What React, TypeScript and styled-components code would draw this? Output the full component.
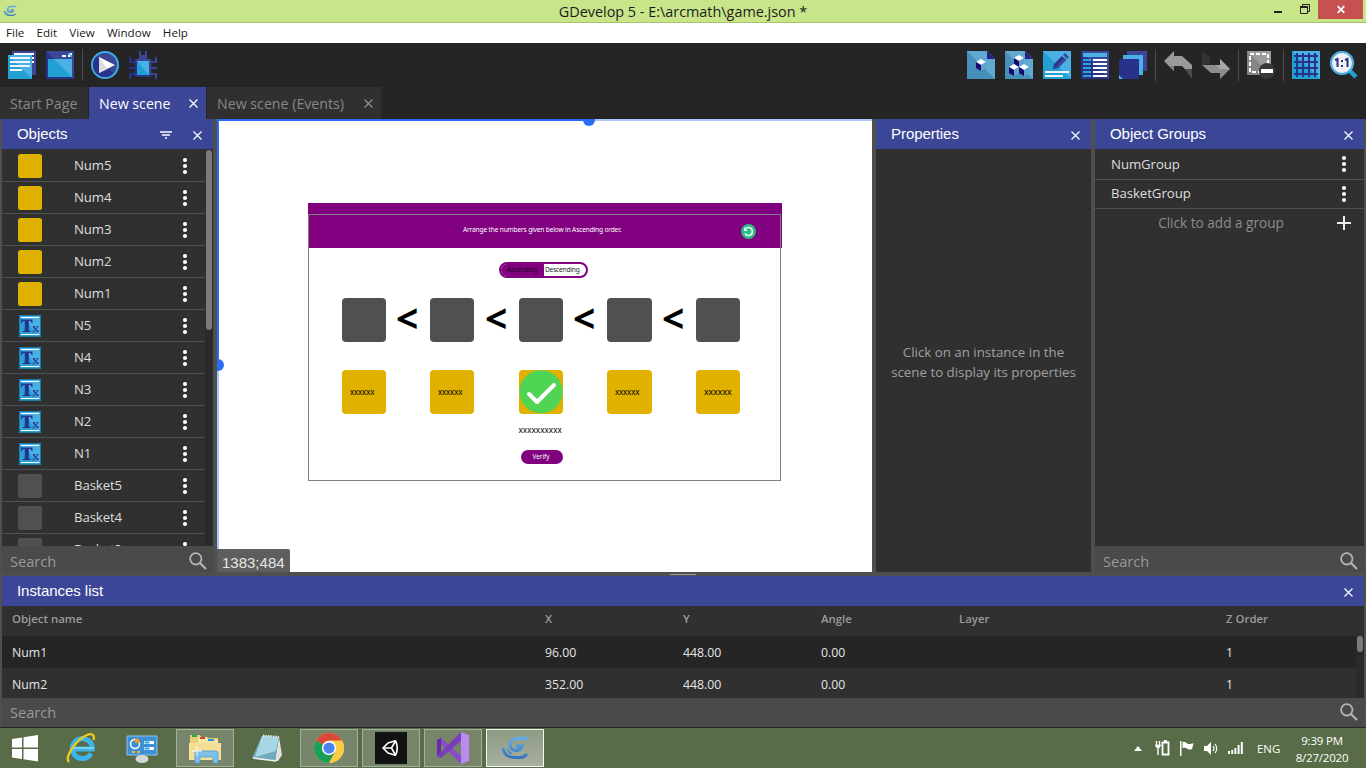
import React from 'react';
import styled, { createGlobalStyle } from 'styled-components';

const ui = '"Open Sans", "Noto Sans", sans-serif';
const head = '"Liberation Sans", Arial, sans-serif';

const Global = createGlobalStyle`
  * { box-sizing: border-box; }
  html, body { margin: 0; padding: 0; background: #4f4f4f; overflow: hidden; }
  body { font-family: ${ui}; }
  svg { display: block; flex: none; }
`;

const Window = styled.div`
  width: 1366px; height: 768px; display: flex; flex-direction: column;
  overflow: hidden; background: #4f4f4f; white-space: nowrap;
`;

/* ---------- title bar and menu ---------- */
const TitleBar = styled.header`
  height: 23px; flex: none; display: grid; grid-template-columns: 140px 1fr 140px;
  background: #c9e58a; border-bottom: 1px solid #a9c26d;
`;
const TitleIcon = styled.div` padding: 4px 0 0 3px; `;
const Title = styled.h1`
  margin: 0; text-align: center; font: 400 14.4px/22px ${ui}; color: #1c1c1c;
  padding-top: 1px;
`;
const WinButtons = styled.div` display: flex; justify-content: flex-end; padding-right: 3px; `;
const WinButton = styled.div<{ $w: number; $red?: boolean }>`
  width: ${p => p.$w}px; height: 19px; display: flex; justify-content: center;
  background: ${p => (p.$red ? '#c75050' : 'transparent')};
`;
const MenuBar = styled.nav`
  height: 20px; flex: none; background: #fff; display: flex; padding-left: 6px; gap: 12.2px;
  font: 400 11.6px/19px ${ui}; color: #1a1a1a;
`;

/* ---------- toolbar ---------- */
const Toolbar = styled.div`
  height: 44px; flex: none; background: #252525; display: flex;
  justify-content: space-between; padding: 6px 8px 0;
`;
const ToolGroup = styled.div`
  display: flex; height: 32px; align-items: center;
  & > svg + svg { margin-left: 10px; }
`;
const Sep = styled.div` width: 1px; height: 32px; margin: 0 8px; background: #4c4c4c; `;

/* ---------- tabs ---------- */
const Tabs = styled.div` height: 32px; flex: none; background: #252525; display: flex; gap: 1px; `;
const Tab = styled.div<{ $w: number; $active?: boolean }>`
  width: ${p => p.$w}px; padding: 0 8px 0 10px; display: flex; justify-content: space-between;
  background: ${p => (p.$active ? '#3b4697' : '#303030')};
  color: ${p => (p.$active ? '#fff' : '#888')};
  font: 400 14.2px/33px ${ui};
  & > svg { margin-top: 11px; }
`;

/* ---------- panels ---------- */
const Workspace = styled.main`
  height: 453px; flex: none; display: grid; padding: 0 2px; gap: 4px;
  grid-template-columns: 211px 655px 215px 269px; background: #4f4f4f;
`;
const Panel = styled.section`
  background: #303030; display: flex; flex-direction: column; min-height: 0; overflow: hidden;
`;
const PanelHead = styled.div`
  height: 30px; flex: none; background: #3b4697; color: #fff; padding: 0 11.5px 0 15px;
  display: flex; align-items: flex-start; font: 400 15px/30px ${head};
  & > span { flex: 1; letter-spacing: -0.05px; }
  & > svg { margin-top: 10.5px; }
`;
const ScrollArea = styled.div` flex: 1; min-height: 0; display: flex; overflow: hidden; padding-top: 1px; `;
const ObjectList = styled.div` width: 203px; `;
const ObjectRow = styled.div`
  height: 32px; display: flex; border-bottom: 1px solid #505050; padding: 4px 14px 0 16px;
  color: #dedede; font: 400 13.2px/23px ${ui};
  & > span { flex: 1; padding-left: 32px; letter-spacing: -0.1px; }
`;
const Track = styled.div` width: 8px; padding-left: 1px; background: #2a2a2a; `;
const Thumb = styled.div<{ $h: number }>`
  width: 6px; height: ${p => p.$h}px; background: #7b7b7b; border-radius: 3px;
`;
const Swatch = styled.i<{ $c: string }>`
  width: 24px; height: 24px; border-radius: 2.5px; background: ${p => p.$c}; flex: none;
`;
const SearchBar = styled.div<{ $h: number; $lh?: number }>`
  height: ${p => p.$h}px; flex: none; background: #4a4a4a; color: #999; display: flex;
  justify-content: space-between; padding: 0 6px 0 8px;
  font: 400 14.6px/${p => p.$lh ?? 30}px ${ui};
  & > svg { margin-top: ${p => (p.$lh ? 5 : 6)}px; }
`;
const GroupRow = styled.div<{ $h: number; $lh: number }>`
  height: ${p => p.$h}px; border-bottom: 1px solid #505050; display: flex;
  justify-content: space-between; padding: 0 14px 0 16px; color: #dedede;
  font: 400 13.2px/${p => p.$lh}px ${ui}; letter-spacing: -0.05px;
  & > svg { margin-top: ${p => Math.floor((p.$h - 24) / 2)}px; }
`;
const AddRow = styled.div`
  height: 29px; display: flex; padding-right: 13px; color: #8c8c8c;
  font: 400 13.6px/28px ${ui};
  & > span { flex: 1; text-align: center; padding-left: 10px; }
  & > svg { margin-top: 7px; }
`;
const Grow = styled.div` flex: 1; `;
const Hint = styled.p`
  margin: auto 0; text-align: center; color: #a0a0a0; font: 400 13.3px/20px ${ui};
  padding-top: 2px;
`;

/* ---------- scene canvas ---------- */
const Canvas = styled.section` position: relative; background: #fff; overflow: hidden; `;
const Item = styled.div<{ $x: number; $y: number; $w?: number; $h?: number; $bg?: string; $r?: number }>`
  position: absolute; left: ${p => p.$x - 217}px; top: ${p => p.$y - 119}px;
  width: ${p => (p.$w ? p.$w + 'px' : 'auto')}; height: ${p => (p.$h ? p.$h + 'px' : 'auto')};
  background: ${p => p.$bg ?? 'transparent'}; border-radius: ${p => p.$r ?? 0}px;
`;
const SceneFrame = styled(Item)` border: 1px solid #808080; `;
const SceneText = styled(Item)<{ $size: number; $c?: string; $ls?: number; $b?: number }>`
  font: ${p => p.$b ?? 400} ${p => p.$size}px/1 "Noto Sans", sans-serif; color: ${p => p.$c ?? '#000'};
  letter-spacing: ${p => p.$ls ?? 0}px;
`;
const Toggle = styled(Item)` border: 2px solid #800080; background: #fff; overflow: hidden; `;
const ToggleOn = styled.div` width: 43px; height: 100%; background: #800080; `;
const Coords = styled(Item)`
  background: rgba(76, 76, 76, 0.9); color: #e6e6e6; padding-left: 5px;
  border-top-right-radius: 2px; font: 400 15px/27px ${head};
`;
const Knob = styled(Item)` background: #2b6cf6; `;

/* ---------- instances list ---------- */
const Splitter = styled.div`
  height: 4px; flex: none; display: flex; justify-content: center; align-items: center;
  &::before { content: ''; width: 26px; height: 1px; background: #9a9a9a; }
`;
const Instances = styled.section`
  height: 151px; flex: none; margin: 0 2px; display: flex; flex-direction: column; background: #303030;
`;
const TableRow = styled.div<{ $h: number; $bg?: string; $head?: boolean }>`
  height: ${p => p.$h}px; background: ${p => p.$bg ?? 'transparent'};
  display: grid; grid-template-columns: 533px 138px 138px 138px 267px 1fr; padding-left: 10px;
  color: ${p => (p.$head ? '#9b9b9b' : '#e4e4e4')};
  font: ${p => (p.$head ? `600 11.4px/26px` : `400 12.3px/33px`)} ${ui};
`;
const TableBody = styled.div` height: 62px; flex: none; display: flex; `;
const Rows = styled.div` width: 1354px; overflow: hidden; `;

/* ---------- taskbar ---------- */
const Taskbar = styled.footer`
  height: 41px; flex: none; background: #586c48; border-top: 1px solid #272727;
  display: flex; justify-content: space-between; color: #fff;
`;
const Apps = styled.div` display: flex; gap: 4px; `;
const TaskButton = styled.div<{ $w?: number; $state?: 'open' | 'active' }>`
  width: ${p => p.$w ?? 58}px; height: 38px; margin-top: 1px; display: flex; align-items: center; justify-content: center;
  background: ${p => (p.$state === 'active' ? 'linear-gradient(#8f9a84,#a7b09f)' : p.$state ? '#77866a' : 'transparent')};
  border: ${p => (p.$state ? `1px solid ${p.$state === 'active' ? '#f4f6f2' : '#a4ae9b'}` : '0')};
`;
const Tray = styled.div` display: flex; align-items: flex-start; font: 400 11.4px/39px ${ui}; padding-right: 12px; `;
const TraySlot = styled.div<{ $w: number }>` width: ${p => p.$w}px; height: 40px; display: flex; align-items: center; `;
const Clock = styled.div`
  width: 62px; font: 400 11.5px/17px ${ui}; text-align: center; padding-top: 4px; margin-right: 1px;
  display: flex; flex-direction: column; align-items: center; letter-spacing: -0.2px;
`;

/* ---------- icons ---------- */
const Cross = ({ s = 9, c = '#fff', w = 1.2 }: { s?: number; c?: string; w?: number }) => (
  <svg width={s} height={s + 2} viewBox={`0 -1 ${s} ${s + 2}`}><path d={`M.5 .5L${s - 0.5} ${s - 0.5}M${s - 0.5} .5L.5 ${s - 0.5}`} stroke={c} strokeWidth={w} /></svg>
);
const FilterIcon = styled.svg` margin-right: 20.5px; `;
const Filter = () => (
  <FilterIcon width="12" height="11" viewBox="0 -1 12 11"><path d="M0 1h12M2 4h8M5 7h2" stroke="#fff" strokeWidth="1.400" /></FilterIcon>
);
const Dots = () => (
  <svg width="12" height="24" viewBox="0 0 12 24" fill="#fff"><circle cx="6" cy="6" r="2.1" /><circle cx="6" cy="12" r="2.1" /><circle cx="6" cy="18" r="2.1" /></svg>
);
const Lens = () => (
  <svg width="18" height="18" viewBox="0 0 18 18" fill="none" stroke="#b4b4b4"><circle cx="6.8" cy="6.8" r="5.7" strokeWidth="1.8" /><path d="M11 11l6 6" strokeWidth="2.2" /></svg>
);
const TextIcon = () => (
  <svg width="24" height="24" viewBox="0 0 24 24">
    <path d="M1 1h22v22H1z" fill="#1b7ea6" /><path d="M2 2h20v20H2z" fill="#29a0d6" /><path d="M2 2h20v20z" fill="#48b0e4" />
    <path d="M3 3.500h18M3 20.500h18" stroke="#fff" strokeWidth="1.200" />
    <path d="M3 5.500h11.500v3.500h-1l-.7-2h-2v9.500l1.800.5v1H5v-1l1.800-.5V7H4.700l-.7 2H3z" fill="#27348b" />
    <path d="M15.500 12.800l4.400 4.900" stroke="#34449a" strokeWidth="1.800" /><path d="M20 12.800l-4.600 4.900M14.800 12.500h2.400M18.500 12.500h2M14.600 17.700h2M18.400 17.700h2.500" stroke="#34449a" strokeWidth="1" />
  </svg>
);
const GLogo = ({ s = 16 }: { s?: number }) => (
  <svg width={s} height={s} viewBox="0 0 28 28" fill="none">
    <defs><linearGradient id={`g${s}`} gradientUnits="userSpaceOnUse" x1="0" y1="3" x2="0" y2="25"><stop offset="0" stopColor="#66b3e8" /><stop offset="1" stopColor="#2f6fc0" /></linearGradient></defs>
    <g stroke={`url(#g${s})`}>
      <path d="M26.500 5H17c-5 0-7.500 2.800-7.500 6s2.200 5.200 5.500 5.200 5-1.700 5.500-4.200H15" strokeWidth="2.900" />
      <path d="M3 13.500c.3 6.500 4.500 9.300 11.500 9.300h4.500c2.500 0 4.500-1 6-3.300" strokeWidth="2.700" />
      <path d="M6.800 15c.8 2.300 2.200 3.700 4.200 4.500" strokeWidth="1.400" />
    </g>
  </svg>
);
const T = ({ children }: { children: React.ReactNode }) => (
  <svg width="28" height="28" viewBox="0 0 28 28">{children}</svg>
);
const IconProject = () => (
  <T><path d="M4 0h24v24H4z" fill="#3b4697" /><path d="M6 3h20M24 7h2M24 11h2" stroke="#fff" strokeWidth="2" />
    <path d="M0 4h24v24H0z" fill="#229fd3" /><path d="M0 4h24v24z" fill="#4bb0e4" />
    <path d="M2 7h20M2 11h20M2 15h20M2 19h12" stroke="#eef4f8" strokeWidth="2" /></T>
);
const IconScene = () => (
  <T><path d="M0 0h28v28H0z" fill="#27328a" /><path d="M0 0h28v28z" fill="#3b4697" />
    <path d="M2 8h24v18H2z" fill="#229fd3" /><path d="M8 8h18v18z" fill="#4bb0e4" />
    <path d="M16 4h4v2h-4zM22 4h2v2h-2zM24 2h2v2h-2z" fill="#fff" /><path d="M22 2h2v2h-2zM24 4h2v2h-2z" fill="#4bb0e4" /></T>
);
const IconPlay = () => (
  <T><circle cx="14" cy="14" r="13" fill="#3b4697" stroke="#3cacdf" strokeWidth="2" />
    <path d="M5.500 5.500a12 12 0 0 0 17 17z" fill="#27328a" /><path d="M8 6l16 8-16 8z" fill="#fff" /><path d="M8 6v16l8-4z" fill="#dcdcdc" /></T>
);
const IconDebug = () => (
  <T><g fill="none" strokeWidth="2"><path d="M1 6v5h7M0 17h8M1 28v-5h7" stroke="#27328a" /><path d="M27 6v5h-7M28 17h-8M27 28v-5h-7" stroke="#3b4697" /></g>
    <path d="M10 0h2v4h4V0h2v9h-8z" fill="#3b4697" /><path d="M6 8h16v18H6z" fill="#3b4697" /><path d="M6 8v18h16z" fill="#27328a" />
    <path d="M8 10h12v14H8z" fill="#229fd3" /><path d="M8 10h12v14z" fill="#4bb0e4" /></T>
);
const Cube = ({ x, y }: { x: number; y: number }) => (
  <g transform={`translate(${x} ${y})`}><path d="M0 3l5-3 5 3-5 3z" fill="#fff" /><path d="M0 3l5 3v6l-5-3z" fill="#170a70" /><path d="M5 6l5-3v6l-5 3z" fill="#5ba3cb" /></g>
);
const IconObj = ({ many }: { many?: boolean }) => (
  <T><path d="M0 0h28v28H0z" fill="#468fb9" /><path d="M0 0h20l8 8v20z" fill="#60aad2" /><path d="M20 0l8 8h-8z" fill="#2b1f8f" /><path d="M20 0h8v8z" fill="#252525" />
    {many ? <><Cube x={9} y={4} /><Cube x={4} y={13} /><Cube x={14} y={13} /></> : <Cube x={9} y={8} />}</T>
);
const IconProps = () => (
  <T><path d="M0 0h28v28H0z" fill="#229fd3" /><path d="M0 0h28v28z" fill="#4bb0e4" />
    <path d="M10 18l1-5 8-8 4 4-8 8z" fill="#27328a" /><path d="M13 15l8-8 2 2-8 8-5 1z" fill="#3b4697" /><path d="M20 4l2-2 4 4-2 2z" fill="#3b4697" />
    <path d="M2 21h24M2 25h18" stroke="#eef4f8" strokeWidth="2" /></T>
);
const IconList = () => (
  <T><path d="M0 0h28v28H0z" fill="#27328a" /><path d="M0 0h28v28z" fill="#3b4697" /><path d="M2 2h24v4H2z" fill="#4bb0e4" />
    <path d="M2 9h8M2 13h8M2 17h8M2 21h8M2 25h8" stroke="#2ea5da" strokeWidth="2" /><path d="M12 9h14M12 13h14M12 17h14M12 21h14M12 25h14" stroke="#fff" strokeWidth="2" /></T>
);
const IconLayers = () => (
  <T><path d="M8 0h20v20H8z" fill="#3b4697" /><path d="M4 4h20v20H4z" fill="#4bb0e4" /><path d="M0 8h20v20H4l-4-4z" fill="#27328a" /><path d="M0 24l4 4H0z" fill="#4bb0e4" /></T>
);
const IconUndo = () => (
  <T><path d="M20 17h8v11z" fill="#4a4a4a" /><path d="M0 10L10 0v5h8l10 9v4h-7l-3-3h-8v5z" fill="#9a9a9a" /><path d="M0 10L10 20v-5H5z" fill="#7f7f7f" /></T>
);
const IconRedo = () => (
  <T><path d="M0 0l8 6v6l-8 3z" fill="#343434" /><path d="M0 14h18V8l10 10-10 10v-6H9z" fill="#8d8d8d" /><path d="M18 8l10 10H18l-4-4h4z" fill="#a6a6a6" /></T>
);
const IconMask = () => (
  <T><path d="M0 0h24v24H0z" fill="#858585" /><path d="M0 0h24v24z" fill="#9c9c9c" /><path d="M3 3h18v18H3z" fill="none" stroke="#fff" strokeWidth="2" strokeDasharray="4 2" />
    <circle cx="20" cy="20" r="8" fill="#383838" /><path d="M14 18h12v4H14z" fill="#fff" /></T>
);
const IconGrid = () => (
  <T><path d="M0 0h28v28H0z" fill="#229fd3" /><path d="M0 0h28v28z" fill="#4bb0e4" /><path d="M5 2v24M11 2v24M17 2v24M23 2v24M2 5h24M2 11h24M2 17h24M2 23h24" stroke="#27328a" strokeWidth="2" /></T>
);
const IconZoom = () => (
  <T><path d="M19 19l7 7" stroke="#229fd3" strokeWidth="4.500" /><circle cx="12" cy="12" r="11" fill="#f2f2f2" stroke="#4bb0e4" strokeWidth="2.200" />
    <path d="M5 9l2.500-1v8M15 9l2.500-1v8" fill="none" stroke="#27328a" strokeWidth="2" /><path d="M11 9h2v2h-2zM11 14h2v2h-2z" fill="#27328a" /></T>
);

/* ---------- data ---------- */
const objects: [string, 'num' | 'text' | 'basket'][] = [
  ['Num5', 'num'], ['Num4', 'num'], ['Num3', 'num'], ['Num2', 'num'], ['Num1', 'num'],
  ['N5', 'text'], ['N4', 'text'], ['N3', 'text'], ['N2', 'text'], ['N1', 'text'],
  ['Basket5', 'basket'], ['Basket4', 'basket'], ['Basket3', 'basket'],
];
const columns = [342, 430, 519, 607, 696];
const widths = [44, 44, 44, 45, 44];

export default function App() {
  return (
    <Window>
      <Global />
      <TitleBar>
        <TitleIcon><GLogo s={14} /></TitleIcon>
        <Title>GDevelop 5 - E:\arcmath\game.json *</Title>
        <WinButtons>
          <WinButton $w={28}><svg width="8" height="19"><path d="M0 11h8v2H0z" fill="#222" /></svg></WinButton>
          <WinButton $w={26}><svg width="12" height="19" fill="none" stroke="#222"><path d="M3.500 6V4.500h7v7H9" /><path d="M1.500 7h7v6.500h-7z" /><path d="M1 7h8" strokeWidth="2" /></svg></WinButton>
          <WinButton $w={45} $red><svg width="8" height="19" viewBox="0 -5.500 8 19"><path d="M.7 .7l6.600 6.600M7.300 .7L.7 7.300" stroke="#fff" strokeWidth="1.800" /></svg></WinButton>
        </WinButtons>
      </TitleBar>
      <MenuBar><span>File</span><span>Edit</span><span>View</span><span>Window</span><span>Help</span></MenuBar>

      <Toolbar>
        <ToolGroup><IconProject /><IconScene /><Sep /><IconPlay /><IconDebug /></ToolGroup>
        <ToolGroup>
          <IconObj /><IconObj many /><IconProps /><IconList /><IconLayers /><Sep />
          <IconUndo /><IconRedo /><Sep /><IconMask /><Sep /><IconGrid /><IconZoom />
        </ToolGroup>
      </Toolbar>

      <Tabs>
        <Tab $w={88}>Start Page</Tab>
        <Tab $w={117} $active>New scene<Cross /></Tab>
        <Tab $w={174}>New scene (Events)<Cross c="#8f8f8f" /></Tab>
      </Tabs>

      <Workspace>
        <Panel>
          <PanelHead><span>Objects</span><Filter /><Cross /></PanelHead>
          <ScrollArea>
            <ObjectList>
              {objects.map(([name, kind]) => (
                <ObjectRow key={name}>
                  {kind === 'text' ? <TextIcon /> : <Swatch $c={kind === 'num' ? '#e1b100' : '#505050'} />}
                  <span>{name}</span><Dots />
                </ObjectRow>
              ))}
            </ObjectList>
            <Track><Thumb $h={180} /></Track>
          </ScrollArea>
          <SearchBar $h={26}>Search<Lens /></SearchBar>
        </Panel>

        <Canvas>
          <Item $x={308} $y={203} $w={474} $h={45} $bg="#800080" />
          <SceneFrame $x={308} $y={214} $w={473} $h={267} />
          <SceneText $x={463} $y={226.5} $size={6.6} $ls={-0.16} $c="#fff">Arrange the numbers given below in Ascending order.</SceneText>
          <Item $x={741} $y={223.5}>
            <svg width="15" height="15" viewBox="0 0 15 15"><circle cx="7.500" cy="7.500" r="7.400" fill="#2bbf85" /><path d="M4 5.500A4 4 0 1 1 4 9.500" fill="none" stroke="#e8fff6" strokeWidth="1.600" /><path d="M3 3v4h3.500z" fill="#e8fff6" /></svg>
          </Item>
          <Toggle $x={499} $y={262} $w={89} $h={16} $r={8}><ToggleOn /></Toggle>
          <SceneText $x={507} $y={266.5} $size={6.6} $ls={-0.2} $c="#250025">Ascending</SceneText>
          <SceneText $x={545} $y={266.5} $size={6.6} $ls={-0.2} $c="#222">Descending</SceneText>
          {columns.map((x, i) => <Item key={x} $x={x} $y={298} $w={widths[i]} $h={44} $bg="#505050" $r={4} />)}
          {[396, 485, 573, 662].map(x => <SceneText key={x} $x={x} $y={298} $size={39} $b={700}>&lt;</SceneText>)}
          {columns.map((x, i) => <Item key={x} $x={x} $y={370} $w={widths[i]} $h={44} $bg="#e1b100" $r={4} />)}
          {[350, 438, 615].map(x => <SceneText key={x} $x={x} $y={388} $size={8} $ls={-0.2}>xxxxxx</SceneText>)}
          <SceneText $x={704} $y={388} $size={8.8} $ls={-0.05}>xxxxxx</SceneText>
          <Item $x={519} $y={370}>
            <svg width="44" height="44"><circle cx="22" cy="21.700" r="21.500" fill="#4fd553" /><path d="M10 24l8 8 17-17" fill="none" stroke="#fff" strokeWidth="4" strokeLinecap="round" strokeLinejoin="round" /></svg>
          </Item>
          <SceneText $x={518.5} $y={426} $size={8.2}>xxxxxxxxxx</SceneText>
          <Item $x={521} $y={450} $w={42} $h={14} $bg="#800080" $r={7} />
          <SceneText $x={532.5} $y={453.5} $size={6.4} $c="#fff">Verify</SceneText>
          <Item $x={217} $y={119} $w={655} $h={2} $bg="linear-gradient(90deg,#2b6cf6 57%,#aac6fb 57%)" />
          <Item $x={217} $y={119} $w={2} $h={453} $bg="linear-gradient(#2b6cf6 54%,#aac6fb 54%)" />
          <Knob $x={583} $y={114} $w={12} $h={12} $r={6} />
          <Knob $x={212} $y={359} $w={12} $h={12} $r={6} />
          <Coords $x={217} $y={549} $w={73} $h={23}>1383;484</Coords>
        </Canvas>

        <Panel>
          <PanelHead><span>Properties</span><Cross /></PanelHead>
          <Hint>Click on an instance in the<br />scene to display its properties</Hint>
        </Panel>

        <Panel>
          <PanelHead><span>Object Groups</span><Cross /></PanelHead>
          <GroupRow $h={31} $lh={30}>NumGroup<Dots /></GroupRow>
          <GroupRow $h={29} $lh={26}>BasketGroup<Dots /></GroupRow>
          <AddRow><span>Click to add a group</span><svg width="14" height="14"><path d="M7 0v14M0 7h14" stroke="#eee" strokeWidth="2" /></svg></AddRow>
          <Grow />
          <SearchBar $h={26}>Search<Lens /></SearchBar>
        </Panel>
      </Workspace>

      <Splitter />
      <Instances>
        <PanelHead><span>Instances list</span><Cross /></PanelHead>
        <TableRow $h={30} $head><span>Object name</span><span>X</span><span>Y</span><span>Angle</span><span>Layer</span><span>Z Order</span></TableRow>
        <TableBody>
          <Rows>
            <TableRow $h={32} $bg="#252525"><span>Num1</span><span>96.00</span><span>448.00</span><span>0.00</span><span /><span>1</span></TableRow>
            <TableRow $h={32}><span>Num2</span><span>352.00</span><span>448.00</span><span>0.00</span><span /><span>1</span></TableRow>
          </Rows>
          <Track><Thumb $h={16} /></Track>
        </TableBody>
        <SearchBar $h={29} $lh={28}>Search<Lens /></SearchBar>
      </Instances>

      <Taskbar>
        <Apps>
          <TaskButton $w={50}><svg width="28" height="28" viewBox="0 0 28 28" fill="#fff"><path d="M1 5l10-1.500v10H1zM12.500 3.300L27 1v12.500H12.500zM1 15h10v10L1 23.500zM12.500 15H27v12.500l-14.500-2.300z" /></svg></TaskButton>
          <TaskButton $w={54}>
            <svg width="32" height="32" viewBox="0 0 32 32" fill="none"><path d="M26 21.500a10 10 0 1 1 1.300-4.500H9" stroke="#3bb6ea" strokeWidth="5" /><path d="M8 16h21" stroke="#8adcf8" strokeWidth="1.500" /><path d="M4 30C-1 25 12 7 22 3c5-2 8-.5 6.500 5" stroke="#f2c81e" strokeWidth="2.400" /></svg>
          </TaskButton>
          <TaskButton $w={60}>
            <svg width="32" height="32" viewBox="0 0 32 32"><path d="M1 4h30v19H1z" fill="#3d8fd6" stroke="#8fc4ee" /><circle cx="9" cy="12" r="4.500" fill="none" stroke="#fff" strokeWidth="1.500" /><path d="M9 6a5 5 0 0 1 5 5H9z" fill="#f59a22" /><path d="M18 9h10v3H18zM18 15h10v3H18z" fill="#fff" /><path d="M18.500 9.500h5v2h-5zM18.500 15.500h5v2h-5z" fill="#24a4d8" /><path d="M6 19h3v2H6zM11 19h3v2h-3z" fill="#f5b342" /><ellipse cx="16" cy="27" rx="6.500" ry="4" fill="#d6d6d6" /></svg>
          </TaskButton>
          <TaskButton $state="open">
            <svg width="34" height="34" viewBox="0 0 34 34"><path d="M2 4h10l2 3h16v22H2z" fill="#e8cf7c" /><path d="M10 6h9l2 3h9v6H10z" fill="#f6e7a8" /><path d="M4 4h5v2H4z" fill="#28a745" /><path d="M12 6h5v2h-5z" fill="#d8432c" /><path d="M20 8h6v2h-6z" fill="#2f8fdc" /><path d="M1 12h32v17H1z" fill="#f3df97" /><path d="M7 32V22q0-2 2-2h19q2 0 2 2v10h-5v-6H12v6z" fill="#7cc0e8" stroke="#4f9dd0" strokeWidth=".8" /><path d="M9 15v10M4 20h10" stroke="#fff" strokeWidth="1" /></svg>
          </TaskButton>
          <TaskButton>
            <svg width="32" height="32" viewBox="0 0 32 32"><path d="M28 5l3 18-4 6-3 0z" fill="#e3e3dc" /><path d="M11 4l17 1-4 24-23-3z" fill="#6fa9bd" /><path d="M11 4l17 1-3 14L4 25z" fill="#a5d6e2" /><path d="M2 26l23 3" stroke="#eee" strokeWidth="1.500" /><path d="M12 3.500l16 1.500" stroke="#e8e8e8" strokeWidth="2" strokeDasharray="1.500 1" /></svg>
          </TaskButton>
          <TaskButton $state="open">
            <svg width="30" height="30" viewBox="0 0 48 48"><circle cx="24" cy="24" r="24" fill="#fbcb43" /><path d="M24 24L3.200 12A24 24 0 0 1 44.800 12z" fill="#d9483b" /><path d="M3.200 12A24 24 0 0 0 24 48l10.500-18.500L24 24z" fill="#1b9e57" /><path d="M24 12h20.800A24 24 0 0 1 24 48l10-18z" fill="#fbcb43" /><circle cx="24" cy="24" r="11.500" fill="#fff" /><circle cx="24" cy="24" r="9" fill="#4a85ee" /></svg>
          </TaskButton>
          <TaskButton $state="open">
            <svg width="32" height="32" viewBox="0 0 32 32" fill="none"><path d="M0 0h32v32H0z" fill="#111" />
              <path d="M8 16l5-5 7.500-2.200c2.200 4.500 2.200 10 0 14.400L13 21z" stroke="#fff" strokeWidth="1.700" strokeLinejoin="round" /><path d="M8 16h8.500l4-7M16.500 16l4 7" stroke="#fff" strokeWidth="1.600" /></svg>
          </TaskButton>
          <TaskButton $state="open">
            <svg width="32" height="32" viewBox="0 0 32 32"><path d="M0 8l4-2 20 18v8z" fill="#8a49c8" /><path d="M0 8v16l4 2V6z" fill="#6a2ba6" /><path d="M0 24l24-24v9L4 26z" fill="#7a3cba" /><path d="M24 0l8 3v26l-8 3z" fill="#b98af0" /></svg>
          </TaskButton>
          <TaskButton $state="active"><GLogo s={30} /></TaskButton>
        </Apps>
        <Tray>
          <TraySlot $w={21}><svg width="8" height="5"><path d="M0 5l4-5 4 5z" fill="#fff" /></svg></TraySlot>
          <TraySlot $w={25}><svg width="15" height="16" viewBox="0 0 15 16" fill="none" stroke="#fff"><path d="M7.500 2.500h6v12h-6z" strokeWidth="1.800" /><path d="M9 1h3" strokeWidth="2" /><path d="M1.500 1v4M4.500 1v4M0 5.500h6M1 7h4M3 7v8" strokeWidth="1.400" /></svg></TraySlot>
          <TraySlot $w={24}><svg width="15" height="15" fill="#fff"><path d="M0 0h1.500v15H0zM2.500 1c3-1 4 2 6 2s3-.5 5.500-.5c-2 2-1 4-2 5.500-2 1-4 .5-5-.5s-2.500-1-4.500-.5z" /></svg></TraySlot>
          <TraySlot $w={24}><svg width="15" height="15" fill="none" stroke="#fff"><path d="M0 5h3l4-4v13l-4-4H0z" fill="#fff" stroke="none" /><path d="M9 5q2 2.500 0 5M11 3q3.500 4.500 0 9" strokeWidth="1.200" /></svg></TraySlot>
          <TraySlot $w={29}><svg width="15" height="12" fill="#fff"><path d="M0 9h2v3H0zM3.200 8h2v4h-2zM6.400 6h2v6h-2zM9.600 3h2v9h-2zM12.800 0h2v12h-2z" /></svg></TraySlot>
          <TraySlot $w={34}>ENG</TraySlot>
          <Clock><span>9:39 PM</span><span>8/27/2020</span></Clock>
        </Tray>
      </Taskbar>
    </Window>
  );
}
